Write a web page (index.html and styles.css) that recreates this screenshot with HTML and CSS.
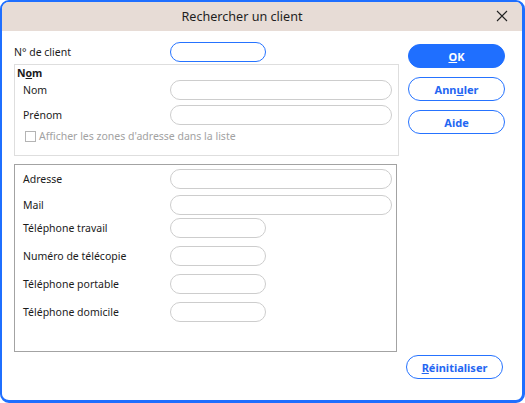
FILE: index.html
```html
<!DOCTYPE html>
<html lang="fr">
<head>
    <meta charset="UTF-8">
    <title>Rechercher un client</title>
    <link rel="stylesheet" href="styles.css">
</head>
<body>
    <div class="window">
        <div class="titlebar">
            <span class="title">Rechercher un client</span>
            <button class="close-btn" aria-label="Fermer">
                <svg width="12" height="12" viewBox="0 0 12 12">
                    <path d="M1 1 L11 11 M11 1 L1 11" stroke="#222" stroke-width="1.1" fill="none"/>
                </svg>
            </button>
        </div>

        <div class="content">
            <div class="main">
                <!-- Client number -->
                <div class="row client-row">
                    <label class="label">N° de client</label>
                    <input class="field short active" type="text">
                </div>

                <!-- Name group -->
                <div class="group group-name">
                    <div class="legend">N<u>o</u>m</div>
                    <div class="row">
                        <label class="label">Nom</label>
                        <input class="field long" type="text">
                    </div>
                    <div class="row row-gap">
                        <label class="label">Prénom</label>
                        <input class="field long" type="text">
                    </div>
                    <label class="check">
                        <span class="box"></span>
                        Afficher les zones d'adresse dans la liste
                    </label>
                </div>

                <!-- Address group -->
                <div class="group group-address">
                    <div class="row">
                        <label class="label">Adresse</label>
                        <input class="field long" type="text">
                    </div>
                    <div class="row" style="margin-top: 6px">
                        <label class="label">Mail</label>
                        <input class="field long" type="text">
                    </div>
                    <div class="row" style="margin-top: 3px">
                        <label class="label">Téléphone travail</label>
                        <input class="field short" type="text">
                    </div>
                    <div class="row" style="margin-top: 8px">
                        <label class="label">Numéro de télécopie</label>
                        <input class="field short" type="text">
                    </div>
                    <div class="row" style="margin-top: 8px">
                        <label class="label">Téléphone portable</label>
                        <input class="field short" type="text">
                    </div>
                    <div class="row" style="margin-top: 8px">
                        <label class="label">Téléphone domicile</label>
                        <input class="field short" type="text">
                    </div>
                </div>
            </div>

            <div class="actions">
                <button class="btn primary"><u>O</u>K</button>
                <button class="btn">Ann<u>u</u>ler</button>
                <button class="btn">Aide</button>
                <div class="spacer"></div>
                <button class="btn reset"><u>R</u>éinitialiser</button>
            </div>
        </div>
    </div>
</body>
</html>
```

FILE: styles.css
```css
/* Dialog styles */
* {
    box-sizing: border-box;
}

body {
    margin: 0;
    padding: 0;
    background: #ffffff;
    font-family: "Noto Sans", "Open Sans", sans-serif;
    color: #1b1b1b;
}

.window {
    width: 525px;
    height: 403px;
    border: solid #1f6fff;
    border-width: 2px 3px 3px 2px;
    border-radius: 9px;
    overflow: hidden;
    display: flex;
    flex-direction: column;
    background: #fff;
}

.titlebar {
    height: 29px;
    flex: none;
    background: #e7dcd6;
    display: flex;
    align-items: center;
    justify-content: center;
    position: relative;
}

.title {
    font-size: 12.6px;
    color: #1e1e1e;
    margin-right: 40px;
}

.close-btn {
    position: absolute;
    right: 13px;
    top: 7px;
    width: 14px;
    height: 14px;
    padding: 0;
    border: none;
    background: none;
    display: flex;
    align-items: center;
    justify-content: center;
}

.content {
    flex: 1;
    display: flex;
    padding: 0 0 0 12px;
}

.main {
    width: 385px;
    display: flex;
    flex-direction: column;
}

.row {
    display: flex;
    align-items: center;
    height: 20px;
}

.label {
    font-size: 10.5px;
    width: 147px;
    flex: none;
    padding-bottom: 1px;
}

.client-row {
    margin-top: 11px;
}

.client-row .label {
    width: 156px;
}

.field {
    height: 20px;
    border: 1px solid #cdcdcd;
    border-radius: 10px;
    background: #fff;
    outline: none;
    padding: 0 8px;
    font-size: 11px;
}

.field.short {
    width: 96px;
}

.field.long {
    width: 222px;
}

.field.active {
    border: 1.5px solid #2673ff;
}

.group {
    border: 1px solid #dedede;
    padding: 0 0 0 8px;
}

.group-name {
    margin-top: 2px;
    height: 92px;
}

.legend {
    font-size: 10.5px;
    font-weight: 700;
    margin-left: -6px;
    height: 15px;
    line-height: 16px;
}

.row-gap {
    margin-top: 5px;
}

.check {
    display: flex;
    align-items: center;
    gap: 3px;
    margin-top: 4px;
    margin-left: 2px;
    font-size: 10.5px;
    color: #a2a2a2;
}

.box {
    width: 11px;
    height: 11px;
    border: 1px solid #b4b4b4;
    background: #fff;
}

.group-address {
    margin-top: 8px;
    height: 188px;
    width: 383px;
    border-color: #a3a3a3;
    padding-top: 4px;
}

.actions {
    flex: 1;
    display: flex;
    flex-direction: column;
    align-items: flex-start;
    padding: 13px 0 21px 9px;
}

.btn {
    width: 97px;
    height: 24px;
    border: 1px solid #2673ff;
    border-radius: 12px;
    background: #fff;
    color: #2466f2;
    font-family: "Noto Sans", sans-serif;
    font-size: 11px;
    font-weight: 700;
    margin-bottom: 8px;
    padding: 0;
}

.btn + .btn {
    margin-top: 1px;
}

.btn.primary {
    background: #1f6fff;
    color: #fff;
    border-color: #1f6fff;
}

.spacer {
    flex: 1;
}

.btn.reset {
    margin-left: -2px;
    margin-bottom: 0;
}
```
